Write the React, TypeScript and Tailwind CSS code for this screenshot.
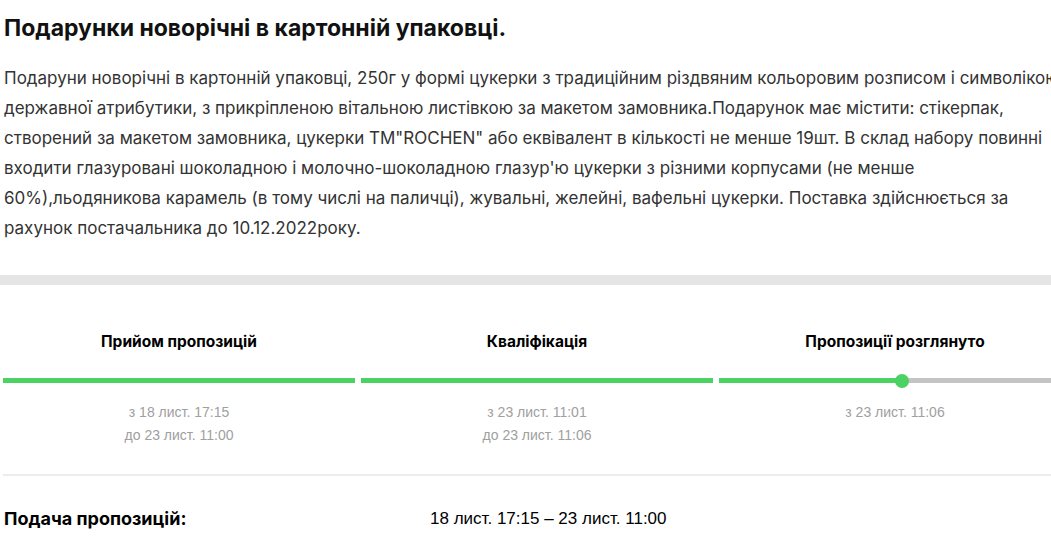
import React from "react";

// ─── Data ─────────────────────────────────────────────────────────────────────

interface Stage {
  title: string;
  lines: string[];
  progress: number; // 0..100
}

const stages: Stage[] = [
  { title: "Прийом пропозицій", lines: ["з 18 лист. 17:15", "до 23 лист. 11:00"], progress: 100 },
  { title: "Кваліфікація", lines: ["з 23 лист. 11:01", "до 23 лист. 11:06"], progress: 100 },
  { title: "Пропозиції розглянуто", lines: ["з 23 лист. 11:06"], progress: 52 },
];

const description =
  "Подаруни новорічні в картонній упаковці, 250г у формі цукерки з традиційним різдвяним кольоровим розписом і символікою державної атрибутики, з прикріпленою вітальною листівкою за макетом замовника.Подарунок має містити: стікерпак, створений за макетом замовника, цукерки ТМ\"ROCHEN\" або еквівалент в кількості не менше 19шт. В склад набору повинні входити глазуровані шоколадною і молочно-шоколадною глазур'ю цукерки з різними корпусами (не менше 60%),льодяникова карамель (в тому числі на паличці), жувальні, желейні, вафельні цукерки. Поставка здійснюється за рахунок постачальника до 10.12.2022року.";

const inter = { fontFamily: "Inter, sans-serif" };

// ─── Stage column ─────────────────────────────────────────────────────────────

function StageColumn({ stage }: { stage: Stage }) {
  const partial = stage.progress < 100;
  return (
    <div className="flex flex-col items-center">
      <p className="text-[15.5px] font-bold leading-5 text-black" style={inter}>
        {stage.title}
      </p>

      {/* Progress bar */}
      <div className="relative mt-[26px] h-[5px] w-full bg-[#c4c4c4]">
        <div
          className="absolute left-0 top-0 h-full bg-[#4cd263]"
          style={{ width: `${stage.progress}%` }}
        />
        {partial && (
          <div
            className="absolute top-1/2 h-[14px] w-[14px] -translate-x-1/2 -translate-y-1/2 rounded-full bg-[#4cd263]"
            style={{ left: `${stage.progress}%` }}
          />
        )}
      </div>

      <div className="mt-[18px] flex flex-col items-center text-[14px] leading-[23px] text-[#a0a0a0]">
        {stage.lines.map((l) => (
          <span key={l}>{l}</span>
        ))}
      </div>
    </div>
  );
}

// ─── Page ─────────────────────────────────────────────────────────────────────

export default function App() {
  return (
    <div
      className="h-[558px] w-[1051px] overflow-hidden bg-white"
      style={{ fontFamily: '"Liberation Sans", Arial, sans-serif' }}
    >
      <div className="w-[1080px] pt-[14px]">
        <div className="pl-[4px] pr-[4px]">
          <h1 className="text-[23px] font-bold leading-[28px] text-[#111]" style={inter}>
            Подарунки новорічні в картонній упаковці.
          </h1>
          <p className="mt-[21px] text-[17px] leading-[30px] text-[#333]" style={inter}>
            {description}
          </p>
        </div>

        {/* Gray band */}
        <div className="mt-[32px] h-[10px] w-full bg-[#e5e5e5]" />

        {/* Timeline */}
        <div className="ml-[3px] mt-[47px] grid w-[1068px] grid-cols-3 gap-[6px]">
          {stages.map((s) => (
            <StageColumn key={s.title} stage={s} />
          ))}
        </div>

        <div className="ml-[3px] mt-[27px] h-[2px] w-[1075px] bg-[#ececec]" />

        {/* Submission row */}
        <div className="ml-[4px] mt-[33px] flex items-center leading-5 text-black">
          <span className="w-[426px] text-[18px] font-bold" style={inter}>
            Подача пропозицій:
          </span>
          <span className="text-[17px]">18 лист. 17:15 – 23 лист. 11:00</span>
        </div>
      </div>
    </div>
  );
}
